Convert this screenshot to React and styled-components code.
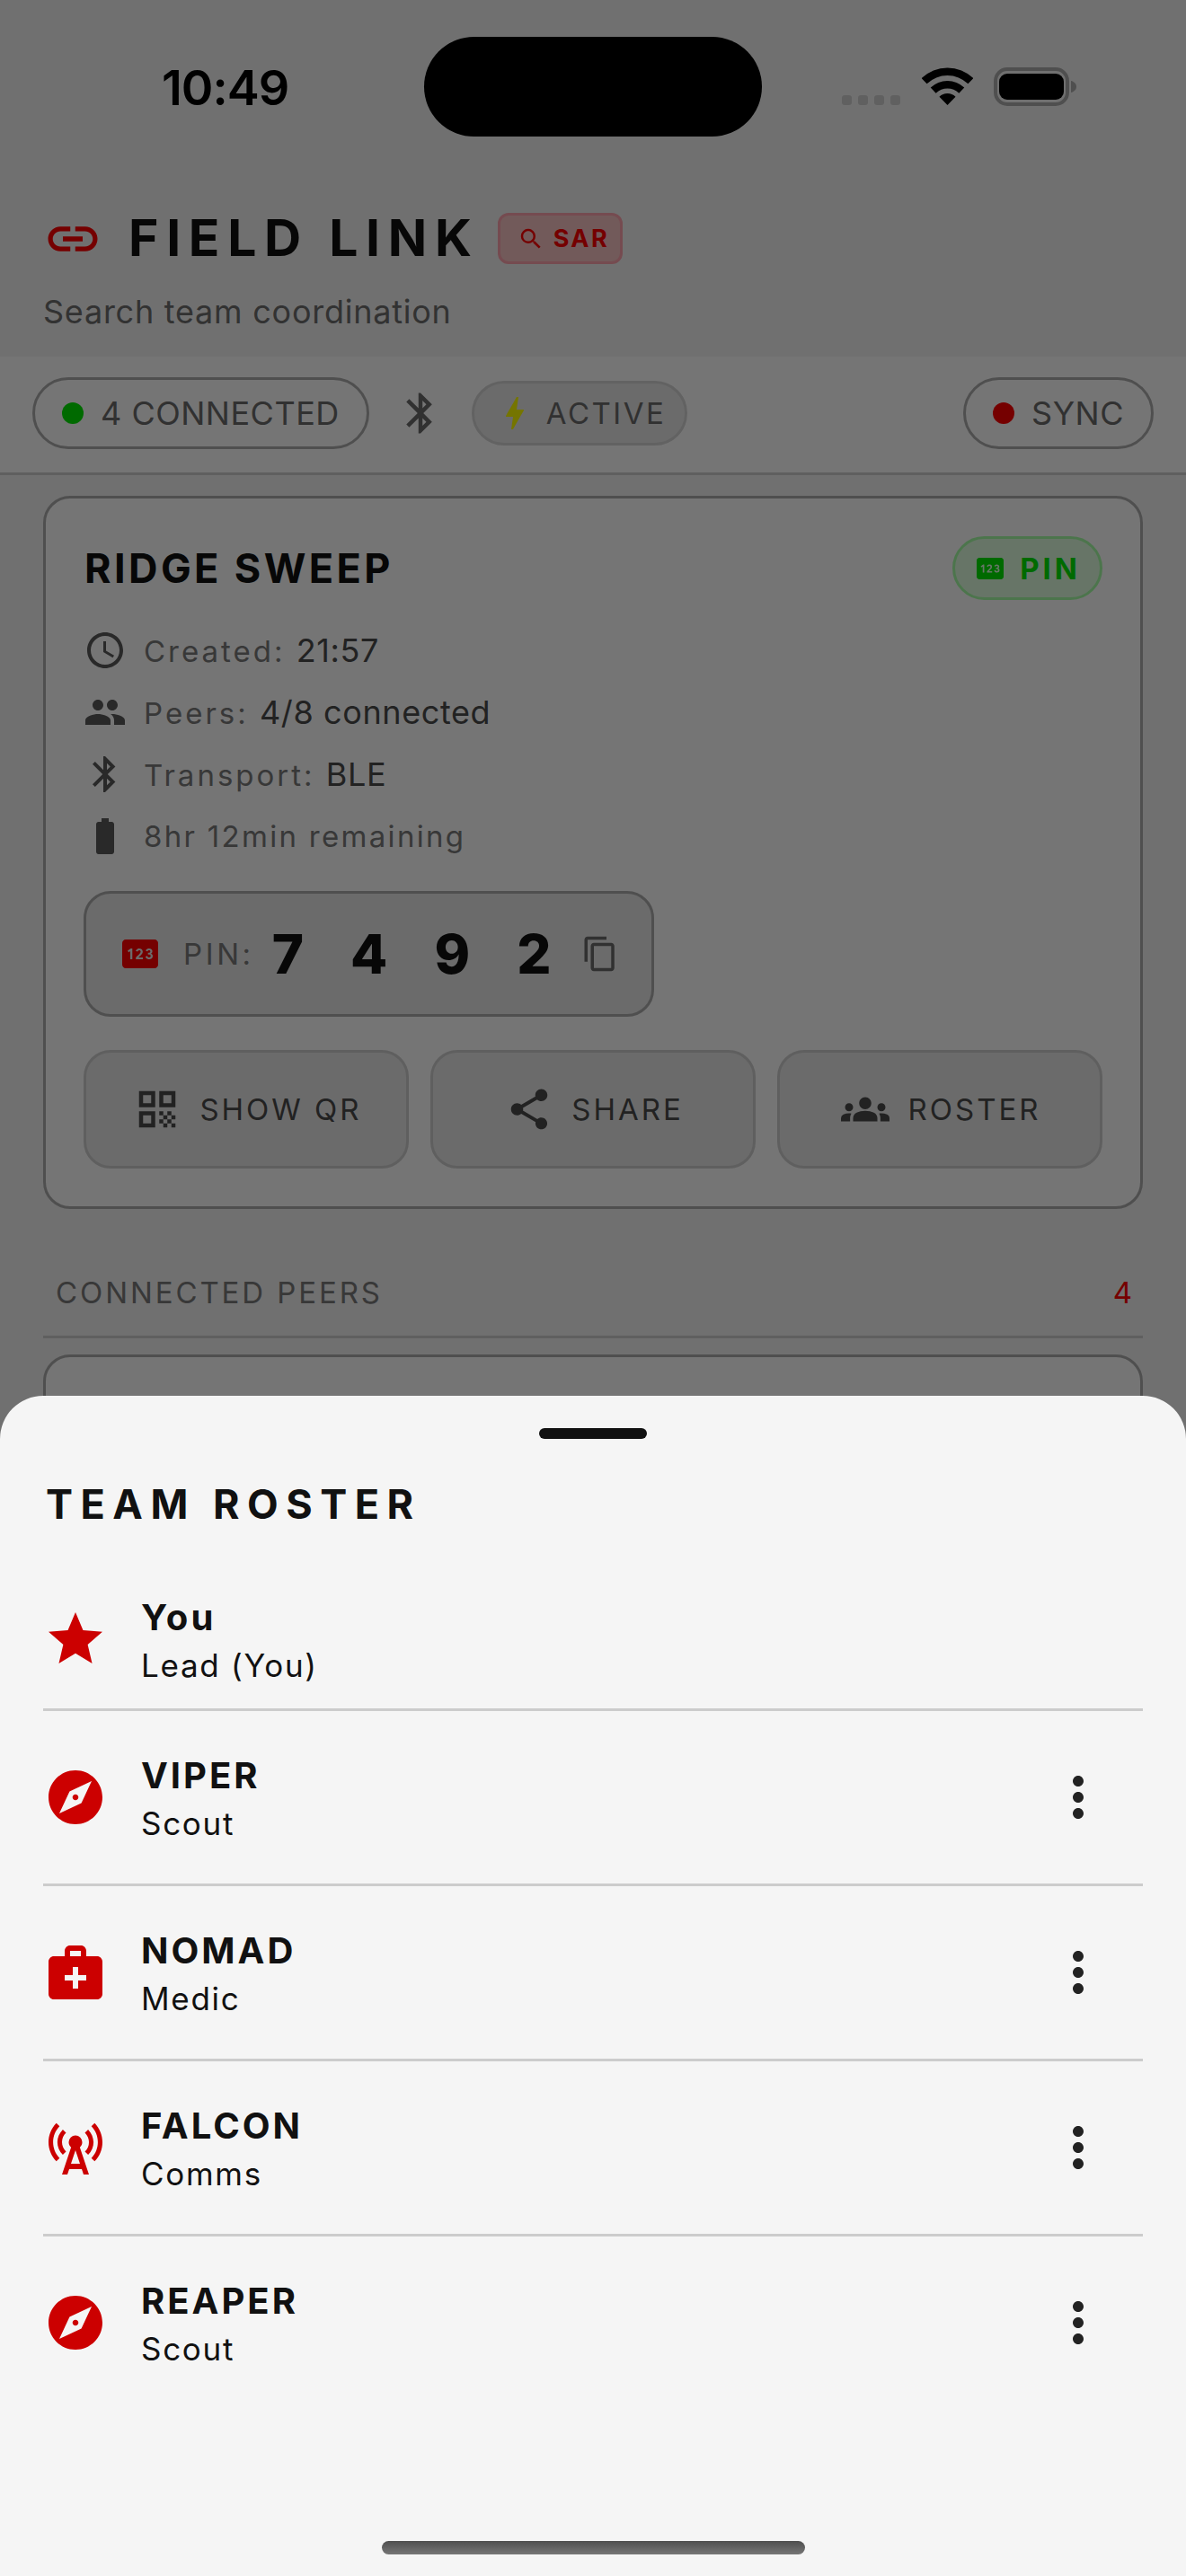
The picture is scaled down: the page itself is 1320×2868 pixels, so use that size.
import React from "react";
import styled, { createGlobalStyle } from "styled-components";
import {
  MdLink, MdSearch, MdBluetooth, MdBolt, MdAccessTime, MdPeople, MdBatteryFull, MdPin,
  MdContentCopy, MdQrCode, MdShare, MdGroups, MdStar, MdExplore, MdMedicalServices,
  MdCellTower, MdMoreVert,
} from "react-icons/md";

const GlobalStyle = createGlobalStyle`
  html, body { margin: 0; padding: 0; background: #f5f5f5; }
  * { box-sizing: border-box; }
  svg { display: block; flex: none; }
  body { font-family: Inter, "Liberation Sans", sans-serif; }
`;

const Screen = styled.div`
  position: relative;
  width: 1320px;
  height: 2868px;
  overflow: hidden;
  background: #f5f5f5;
  color: #111;
`;

const StatusBar = styled.div`
  display: flex;
  align-items: flex-start;
  height: 207px;
  padding: 41px 0 0 180px;
`;
const Time = styled.div`
  width: 292px;
  margin-top: 27px;
  font-size: 54px;
  font-weight: 600;
  line-height: 60px;
  letter-spacing: -1px;
  color: #000;
`;
const Island = styled.div`
  width: 376px;
  height: 111px;
  border-radius: 56px;
  background: #000;
`;
const StatusRight = styled.div`
  display: flex;
  align-items: flex-end;
  height: 43px;
  margin: 34px 0 0 89px;
`;
const SignalDots = styled.div`
  display: flex;
  gap: 7px;
  margin: 0 24px 1px 0;
`;
const SignalDot = styled.span`
  width: 11px;
  height: 11px;
  border-radius: 3px;
  background: #d2d2d2;
`;
const WifiSvg = styled.svg`
  margin-right: 23px;
  margin-bottom: 1px;
`;

const Header = styled.header`
  padding: 30px 48px 23px;
`;
const TitleRow = styled.div`
  display: flex;
  align-items: center;
  height: 57px;
  color: #ff0000;
`;
const Title = styled.h1`
  margin: 0 20px 0 29px;
  padding-bottom: 2px;
  font-size: 57px;
  line-height: 55px;
  font-weight: 700;
  letter-spacing: 8.7px;
  color: #111;
  white-space: nowrap;
`;
const SarBadge = styled.div`
  display: flex;
  align-items: center;
  gap: 10px;
  width: 139px;
  height: 57px;
  padding: 0 0 0 19px;
  border: 3px solid #ffa3ae;
  border-radius: 12px;
  background: #f8c4c4;
  color: #ff0000;
  font-size: 27px;
  font-weight: 700;
  letter-spacing: 2.4px;
`;
const Subtitle = styled.p`
  margin: 26px 0 0;
  font-size: 36px;
  line-height: 54px;
  letter-spacing: 0.75px;
  color: #6e6e6e;
`;

const Strip = styled.div`
  display: flex;
  align-items: center;
  gap: 30px;
  height: 132px;
  padding: 0 36px 3px 36px;
  background: #fff;
  border-bottom: 3px solid #cfcfcf;
`;
const Pill = styled.div`
  display: flex;
  align-items: center;
  gap: ${(p) => p.$gap || 19}px;
  height: ${(p) => (p.$active ? 72 : 80)}px;
  padding: 0 ${(p) => (p.$active ? 21 : 30)}px 0 ${(p) => (p.$active ? 34 : 30)}px;
  margin-left: ${(p) => (p.$end ? "auto" : 0)};
  border: 3px solid ${(p) => (p.$active ? "#d6d6d6" : "#adadad")};
  border-radius: 40px;
  background: ${(p) => (p.$active ? "#e9e9e9" : "transparent")};
`;
const Dot = styled.span`
  width: 24px;
  height: 24px;
  border-radius: 50%;
  background: ${(p) => p.$color};
`;
const PillText = styled.span`
  font-size: ${(p) => (p.$small ? 33 : 36)}px;
  letter-spacing: ${(p) => (p.$small ? 2.5 : 0.5)}px;
  color: #6b6b6b;
  white-space: nowrap;
`;
const StripIcon = styled.span`
  color: #6b6b6b;
`;
const BoltIcon = styled.span`
  color: #ffff00;
  margin: 0 0 0 -13px;
`;

const Content = styled.main`
  padding: 23px 48px 0;
`;
const Card = styled.section`
  padding: 42px 42px 42px;
  border: 3px solid #adadad;
  border-radius: 30px;
  background: #fff;
`;
const EmptyCard = styled(Card)`
  height: 300px;
  margin-top: 18px;
`;
const CardHead = styled.div`
  display: flex;
  align-items: center;
  justify-content: space-between;
  height: 71px;
`;
const CardTitle = styled.h2`
  margin: 0 0 0 1px;
  font-size: 45px;
  font-weight: 700;
  letter-spacing: 3.4px;
  color: #111;
`;
const PinBadge = styled.div`
  display: flex;
  align-items: center;
  gap: 15px;
  height: 71px;
  padding: 0 21px 0 21px;
  border: 3px solid #a7ffa7;
  border-radius: 36px;
  background: #e0ffe0;
  color: #00e600;
  font-size: 33px;
  font-weight: 700;
  letter-spacing: 4px;
`;
const InfoList = styled.div`
  display: flex;
  flex-direction: column;
  gap: 21px;
  margin-top: 32px;
`;
const InfoRow = styled.div`
  display: flex;
  align-items: center;
  gap: 19px;
  height: 48px;
  color: #5a5a5a;
`;
const InfoText = styled.span`
  font-size: 33px;
  letter-spacing: ${(p) => (p.$plain ? 2.3 : 3)}px;
  color: #7a7a7a;
  white-space: nowrap;
`;
const InfoValue = styled.span`
  font-size: 36px;
  letter-spacing: 0.6px;
  color: #4a4a4a;
`;
const PinBox = styled.div`
  display: inline-flex;
  align-items: center;
  margin-top: 37px;
  padding: 30px 36px;
  border: 3px solid #adadad;
  border-radius: 30px;
  background: #e9e9e9;
`;
const PinIcon = styled.span`
  color: #ff0000;
  margin-right: 24px;
`;
const PinLabel = styled.span`
  font-size: 33px;
  letter-spacing: 3.6px;
  color: #7a7a7a;
  margin-right: 20px;
`;
const PinDigits = styled.span`
  font-size: 60px;
  line-height: 74px;
  font-weight: 800;
  letter-spacing: 19.5px;
  color: #111;
  white-space: nowrap;
`;
const CopyIcon = styled.span`
  color: #6b6b6b;
  margin-left: 14px;
`;
const Actions = styled.div`
  display: grid;
  grid-template-columns: repeat(3, 1fr);
  gap: 24px;
  margin-top: 37px;
`;
const ActionBtn = styled.button`
  display: flex;
  align-items: center;
  justify-content: center;
  gap: 20px;
  height: 132px;
  padding: 0 0 0 3px;
  border: 3px solid #d0d0d0;
  border-radius: 30px;
  background: #e9e9e9;
  color: #4a4a4a;
  font-family: inherit;
  font-size: 33px;
  letter-spacing: 3px;
`;
const SectionHead = styled.div`
  display: flex;
  align-items: center;
  justify-content: space-between;
  margin-top: 69px;
  padding: 0 12px 24px 14px;
  border-bottom: 3px solid #cfcfcf;
  line-height: 48px;
`;
const SectionLabel = styled.span`
  font-size: 33px;
  letter-spacing: 2.9px;
  color: #7a7a7a;
`;
const SectionCount = styled.span`
  font-size: 33px;
  color: #ff0000;
`;

const Scrim = styled.div`
  position: absolute;
  inset: 0;
  background: rgba(0, 0, 0, 0.54);
`;
const Sheet = styled.aside`
  position: absolute;
  left: 0;
  right: 0;
  bottom: 0;
  height: 1314px;
  padding: 36px 48px 0;
  border-radius: 48px 48px 0 0;
  background: #f5f5f5;
`;
const Handle = styled.div`
  width: 120px;
  height: 12px;
  margin: 0 auto;
  border-radius: 6px;
  background: #111;
`;
const SheetTitle = styled.h3`
  margin: 43px 0 43px 3px;
  font-size: 45px;
  line-height: 60px;
  font-weight: 700;
  letter-spacing: 8.5px;
  color: #111;
`;
const RosterRow = styled.div`
  display: flex;
  align-items: center;
  gap: 37px;
  padding: ${(p) => (p.$first ? 21 : 24)}px 0;
  border-bottom: 3px solid ${(p) => (p.$last ? "transparent" : "#cccccc")};
`;
const RoleIcon = styled.span`
  color: #cc0000;
`;
const RosterText = styled.div`
  flex: 1;
  min-width: 0;
  padding-top: 6px;
`;
const RosterName = styled.div`
  font-size: 40px;
  line-height: 52px;
  font-weight: 700;
  letter-spacing: 3px;
  color: #111;
`;
const RosterRole = styled.div`
  font-size: 35px;
  line-height: 54px;
  letter-spacing: 1.7px;
  color: #111;
`;
const MenuBtn = styled.button`
  display: flex;
  width: 144px;
  height: 144px;
  padding: 36px;
  border: 0;
  background: none;
  color: #222;
`;
const HomeBar = styled.div`
  position: absolute;
  left: 425px;
  bottom: 24px;
  width: 471px;
  height: 15px;
  border-radius: 8px;
  background: linear-gradient(#4e4e4e, #767676);
`;

function arc(r0, r1, deg) {
  const cx = 28.5, cy = 42;
  const a = (deg * Math.PI) / 180;
  const pt = (r, s) => `${(cx + s * r * Math.sin(a)).toFixed(2)} ${(cy - r * Math.cos(a)).toFixed(2)}`;
  const outer = `M${pt(r1, -1)} A${r1} ${r1} 0 0 1 ${pt(r1, 1)}`;
  return r0 === 0
    ? `${outer} L${cx} ${cy} Z`
    : `${outer} L${pt(r0, 1)} A${r0} ${r0} 0 0 0 ${pt(r0, -1)} Z`;
}

const Wifi = () => (
  <WifiSvg width="57" height="42" viewBox="0 0 57 42" fill="#000">
    <path d={arc(33, 41.5, 44)} />
    <path d={arc(18.5, 27, 44)} />
    <path d={arc(0, 13, 44)} />
  </WifiSvg>
);

const Battery = () => (
  <svg width="92" height="43" viewBox="0 0 92 43">
    <rect x="2" y="2" width="80" height="39" rx="13" fill="none" stroke="#adadad" strokeWidth="4" />
    <rect x="6" y="7" width="72" height="29" rx="9" fill="#000" />
    <path d="M86 15c3 .6 6 3 6 6.500s-3 5.900-6 6.500z" fill="#adadad" />
  </svg>
);

const roster = [
  { name: "VIPER", role: "Scout", Icon: MdExplore },
  { name: "NOMAD", role: "Medic", Icon: MdMedicalServices },
  { name: "FALCON", role: "Comms", Icon: MdCellTower },
  { name: "REAPER", role: "Scout", Icon: MdExplore, last: true },
];

export default function App() {
  return (
    <Screen>
      <GlobalStyle />
      <StatusBar>
        <Time>10:49</Time>
        <Island />
        <StatusRight>
          <SignalDots>
            <SignalDot /><SignalDot /><SignalDot /><SignalDot />
          </SignalDots>
          <Wifi />
          <Battery />
        </StatusRight>
      </StatusBar>

      <Header>
        <TitleRow>
          <MdLink size={66} />
          <Title>FIELD LINK</Title>
          <SarBadge>
            <MdSearch size={30} />
            SAR
          </SarBadge>
        </TitleRow>
        <Subtitle>Search team coordination</Subtitle>
      </Header>

      <Strip>
        <Pill>
          <Dot $color="#00e600" />
          <PillText>4 CONNECTED</PillText>
        </Pill>
        <StripIcon><MdBluetooth size={54} /></StripIcon>
        <Pill $active $gap={11}>
          <BoltIcon><MdBolt size={48} /></BoltIcon>
          <PillText $small>ACTIVE</PillText>
        </Pill>
        <Pill $end>
          <Dot $color="#ff0000" />
          <PillText>SYNC</PillText>
        </Pill>
      </Strip>

      <Content>
        <Card>
          <CardHead>
            <CardTitle>RIDGE SWEEP</CardTitle>
            <PinBadge>
              <MdPin size={36} />
              PIN
            </PinBadge>
          </CardHead>
          <InfoList>
            <InfoRow>
              <MdAccessTime size={48} />
              <InfoText>Created: <InfoValue>21:57</InfoValue></InfoText>
            </InfoRow>
            <InfoRow>
              <MdPeople size={48} />
              <InfoText>Peers: <InfoValue>4/8 connected</InfoValue></InfoText>
            </InfoRow>
            <InfoRow>
              <MdBluetooth size={48} />
              <InfoText>Transport: <InfoValue>BLE</InfoValue></InfoText>
            </InfoRow>
            <InfoRow>
              <MdBatteryFull size={48} />
              <InfoText $plain>8hr 12min remaining</InfoText>
            </InfoRow>
          </InfoList>
          <PinBox>
            <PinIcon><MdPin size={48} /></PinIcon>
            <PinLabel>PIN:</PinLabel>
            <PinDigits>7 4 9 2</PinDigits>
            <CopyIcon><MdContentCopy size={42} /></CopyIcon>
          </PinBox>
          <Actions>
            <ActionBtn><MdQrCode size={54} />SHOW QR</ActionBtn>
            <ActionBtn><MdShare size={54} />SHARE</ActionBtn>
            <ActionBtn><MdGroups size={54} />ROSTER</ActionBtn>
          </Actions>
        </Card>

        <SectionHead>
          <SectionLabel>CONNECTED PEERS</SectionLabel>
          <SectionCount>4</SectionCount>
        </SectionHead>
        <EmptyCard />
      </Content>

      <Scrim />

      <Sheet>
        <Handle />
        <SheetTitle>TEAM ROSTER</SheetTitle>
        <RosterRow $first>
          <RoleIcon><MdStar size={72} /></RoleIcon>
          <RosterText>
            <RosterName>You</RosterName>
            <RosterRole>Lead (You)</RosterRole>
          </RosterText>
        </RosterRow>
        {roster.map(({ name, role, Icon, last }) => (
          <RosterRow key={name} $last={last}>
            <RoleIcon><Icon size={72} /></RoleIcon>
            <RosterText>
              <RosterName>{name}</RosterName>
              <RosterRole>{role}</RosterRole>
            </RosterText>
            <MenuBtn aria-label="More"><MdMoreVert size={72} /></MenuBtn>
          </RosterRow>
        ))}
        <HomeBar />
      </Sheet>
    </Screen>
  );
}
